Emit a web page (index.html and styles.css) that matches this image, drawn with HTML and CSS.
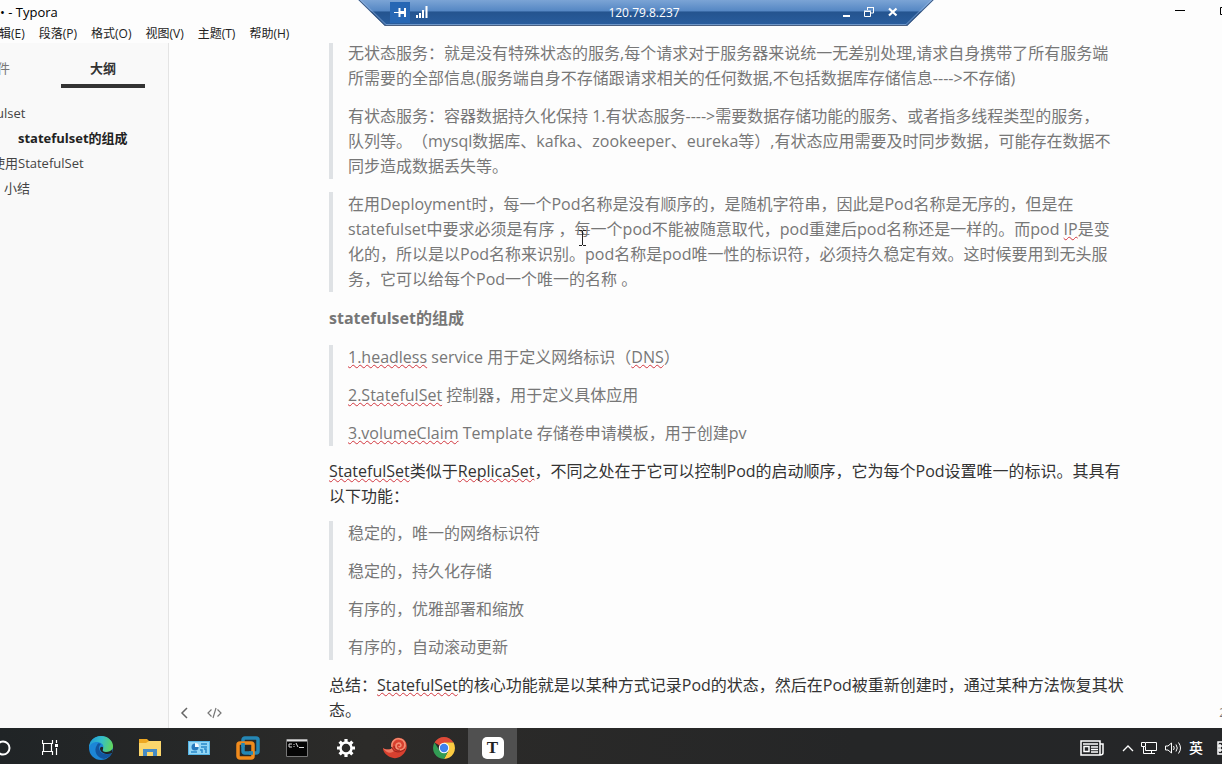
FILE: index.html
```html
<!DOCTYPE html>
<html lang="zh-CN">
<head>
<meta charset="utf-8">
<title>Typora</title>
<link rel="stylesheet" href="styles.css">
</head>
<body>
<header class="titlebar">
  <div class="title-row">
    <span class="title">• - Typora</span>
    <div class="window-controls">
      <button class="plain" aria-label="最小化"><svg width="10" height="10"><path d="M0 4.500H10" stroke="#000"/></svg></button>
      <button class="plain" aria-label="最大化"><svg width="10" height="10"><path d="M.5 1.500H9.500V8.500H.5Z" fill="none" stroke="#000"/></svg></button>
    </div>
  </div>
  <nav class="menu">
    <button class="plain">编辑(E)</button><button class="plain">段落(P)</button><button class="plain">格式(O)</button><button class="plain">视图(V)</button><button class="plain">主题(T)</button><button class="plain">帮助(H)</button>
  </nav>
</header>

<div class="remote-bar">
  <svg class="remote-shape" viewBox="0 0 576 27" preserveAspectRatio="none">
    <defs><linearGradient id="rb" x1="0" y1="0" x2="0" y2="1"><stop offset="0" stop-color="#7ba4d5"/><stop offset=".42" stop-color="#5587c4"/><stop offset=".46" stop-color="#24548f"/><stop offset="1" stop-color="#2a5e9f"/></linearGradient></defs>
    <path d="M0 0H576L549 26H27Z" fill="url(#rb)"/>
    <path d="M1 0L27 25.500H549L575 0" fill="none" stroke="#4a5f80"/>
    <path d="M3 0L28 24.500H548L573 0" fill="none" stroke="#8fb2dc" stroke-width=".7"/>
  </svg>
  <div class="remote-content">
    <div class="remote-left">
      <button class="plain pin" aria-label="固定"><svg width="13" height="11" fill="none" stroke="#fff"><path d="M0 5.500H5" stroke-width="1"/><path d="M5.500 1V10M11 1V10" stroke-width="2"/><path d="M5 5.500H11" stroke-width="3"/></svg></button>
      <svg width="12" height="12" fill="#fff"><path d="M0 9h2v3H0zM3 7h2v5H3zM6 4h2v8H6zM9.500 0H11.500V12H9.500z"/></svg>
    </div>
    <span class="remote-ip">120.79.8.237</span>
    <div class="remote-right">
      <button class="plain" aria-label="最小化"><svg width="10" height="12"><path d="M3 10H10" stroke="#fff" stroke-width="2"/></svg></button>
      <button class="plain" aria-label="还原"><svg width="10" height="12" fill="none" stroke="#fff"><path d="M3.500 4V1.500H9.500V7H7M3 1.500H10" /><path d="M.5 5.500H6.500V10.500H.5ZM0 5H7"/></svg></button>
      <button class="plain" aria-label="关闭"><svg width="10" height="12"><path d="M1 2.500L8.500 9.500M8.500 2.500L1 9.500" stroke="#fff" stroke-width="2.200"/></svg></button>
    </div>
  </div>
</div>

<div class="workspace">
  <aside class="sidebar">
    <div class="tabs">
      <button class="plain tab">文件</button>
      <button class="plain tab tab-active">大纲</button>
    </div>
    <nav class="outline">
      <a class="cut-word" href="#top">ulset</a>
      <a class="current" href="#parts">statefulset的组成</a>
      <a class="cut" href="#use">使用StatefulSet</a>
      <a class="last" href="#end">小结</a>
    </nav>
  </aside>
  <main class="editor">
    <article class="doc">
      <blockquote>
        <p>无状态服务：就是没有特殊状态的服务,每个请求对于服务器来说统一无差别处理,请求自身携带了所有服务端<br>所需要的全部信息(服务端自身不存储跟请求相关的任何数据,不包括数据库存储信息----&gt;不存储)</p>
        <p>有状态服务：容器数据持久化保持 1.有状态服务----&gt;需要数据存储功能的服务、或者指多线程类型的服务，<br>队列等。（mysql数据库、kafka、zookeeper、eureka等）,有状态应用需要及时同步数据，可能存在数据不<br>同步造成数据丢失等。</p>
      </blockquote>
      <blockquote>
        <p>在用Deployment时，每一个Pod名称是没有顺序的，是随机字符串，因此是Pod名称是无序的，但是在<br>statefulset中要求必须是有序 ，每一个pod不能被随意取代，pod重建后pod名称还是一样的。而pod <u>IP</u>是变<br>化的，所以是以Pod名称来识别。pod名称是pod唯一性的标识符，必须持久稳定有效。这时候要用到无头服<br>务，它可以给每个Pod一个唯一的名称 。</p>
      </blockquote>
      <h6 id="parts">statefulset的组成</h6>
      <blockquote>
        <p><u>1.headless</u> service 用于定义网络标识（<u>DNS</u>）</p>
        <p><u>2.StatefulSet</u> 控制器，用于定义具体应用</p>
        <p><u>3.volumeClaim</u> Template 存储卷申请模板，用于创建pv</p>
      </blockquote>
      <p><u>StatefulSet</u>类似于<u>ReplicaSet</u>，不同之处在于它可以控制Pod的启动顺序，它为每个Pod设置唯一的标识。其具有<br>以下功能：</p>
      <blockquote>
        <p>稳定的，唯一的网络标识符</p>
        <p>稳定的，持久化存储</p>
        <p>有序的，优雅部署和缩放</p>
        <p>有序的，自动滚动更新</p>
      </blockquote>
      <p>总结：<u>StatefulSet</u>的核心功能就是以某种方式记录Pod的状态，然后在Pod被重新创建时，通过某种方法恢复其状<br>态。</p>
    </article>
    <div class="status">
      <button class="plain" aria-label="隐藏侧边栏"><svg width="8" height="12" fill="none" stroke="#666" stroke-width="1.500"><path d="M7 1L2 6L7 11"/></svg></button>
      <button class="plain" aria-label="源代码模式"><svg width="15" height="12" fill="none" stroke="#777" stroke-width="1.200"><path d="M4.500 2.500L1 6L4.500 9.500M10.500 2.500L14 6L10.500 9.500M9 1L6 11"/></svg></button>
    </div>
    <span class="words">2</span>
    <svg class="caret" width="9" height="17" fill="none" stroke="#222"><path d="M1 .5H4M5 .5H8M4.500 1V15M1 15.500H4M5 15.500H8"/></svg>
  </main>
</div>

<footer class="taskbar">
  <div class="apps">
    <button class="plain app" aria-label="Cortana"><svg width="18" height="18"><circle cx="9" cy="9" r="6.500" fill="none" stroke="#fff" stroke-width="2"/></svg></button>
    <button class="plain app" aria-label="任务视图"><svg width="20" height="18" fill="none" stroke="#fff" stroke-width="1.200"><path d="M.5 1V4.500H10.500V1M1.500 4.500V12.500M9.500 4.500V12.500M.5 16V12.500H10.500V16M14.500 1V4M14.500 9V16"/><path d="M13 5h3v3h-3z" fill="#fff" stroke="none"/></svg></button>
    <button class="plain app" aria-label="Edge"><svg width="24" height="24" viewBox="0 0 24 24"><defs><linearGradient id="eg" x1="0" y1=".3" x2="1" y2=".5"><stop offset="0" stop-color="#219bd8"/><stop offset=".5" stop-color="#35bfc8"/><stop offset="1" stop-color="#62d65b"/></linearGradient></defs><circle cx="12" cy="12" r="12" fill="#1c86d6"/><path d="M0 12C0 5 5 0 12 0S24 5 24 10C24 14 21 16 17 16C14 16 13 15 14 13C16 8 11 6 8 6C4 6 1 8 0 12Z" fill="url(#eg)"/><path d="M8 9C4 15 8 22 15 23C19 22 22 19 23 17C19 19 11 19 10 12C10 10 11 9 12 8C10 7 9 7 8 9Z" fill="#12559f"/><path d="M14 13C13 15 14 16 17 16C20 16 22 15 23.500 13L23 17C19 19 12 18 11 13C11 10 15 10 14 13Z" fill="#212325"/></svg></button>
    <button class="plain app" aria-label="文件资源管理器"><svg width="22" height="20" viewBox="0 0 22 20"><path d="M0 1H8L10 3H22V18H0Z" fill="#eda722"/><path d="M0 5H7L10 3H22V18H0Z" fill="#fbd66c"/><path d="M4 18V11H18V18H14V14H8V18Z" fill="#468bc5"/></svg></button>
    <button class="plain app" aria-label="控制面板"><svg width="22" height="16" viewBox="0 0 22 16"><path d="M0 1H22V15H0Z" fill="#55b5e6"/><path d="M1 2H21V14H1Z" fill="#93d6f5"/><circle cx="7" cy="7" r="3.500" fill="#2679bd"/><path d="M7 7V3A4 4 0 0 1 11 7Z" fill="#f4faff"/><path d="M13 4H19M13 7H19M3 12H9M12 10H14V13M16 9H18V13" stroke="#2a89c9" stroke-width="1.500" fill="none"/></svg></button>
    <button class="plain app" aria-label="VMware"><svg width="24" height="24" fill="none" stroke-width="3.500"><rect x="7" y="2" width="15" height="15" rx="2" stroke="#2587b5"/><rect x="2" y="7" width="15" height="15" rx="2" stroke="#f18b1c"/><path d="M7 11V7M13 17H17" stroke="#2587b5"/></svg></button>
    <button class="plain app" aria-label="命令提示符"><svg width="22" height="18"><path d="M.5 .5H21.500V17.500H.5Z" fill="#050505" stroke="#777"/><path d="M1 1.500H21" stroke="#ddd" stroke-width="2"/><path d="M6 5H3V8H6M8 5V6M8 7V8M10 4L12 8M13 8.500H18" stroke="#ddd" fill="none"/></svg></button>
    <button class="plain app" aria-label="设置"><svg width="20" height="20" viewBox="0 0 20 20"><circle cx="10" cy="10" r="5.500" fill="none" stroke="#fff" stroke-width="2.500"/><path d="M10 1V4M10 16V19M1 10H4M16 10H19M3.600 3.600L6 6M14 14L16.400 16.400M16.400 3.600L14 6M6 14L3.600 16.400" stroke="#fff" stroke-width="3.200"/></svg></button>
    <button class="plain app" aria-label="Shell"><svg width="24" height="22" viewBox="0 0 24 22"><path d="M0 11C3 13 7 13 9 11C7 4 12 0 17 1C23 2 25 8 23 13C20 20 13 23 7 20C3 18 0 15 0 11Z" fill="#d8402f"/><path d="M0 11C3 13 7 13 9 11L11 14C8 17 3 16 0 11Z" fill="#ef7a63"/><path d="M9 10C8 4 13 1 17 2C22 3 23 8 21 11C18 14 13 13 13 9C13 6 17 5 18 8C18 10 16 10 16 9" fill="none" stroke="#f28e73" stroke-width="1.600"/><path d="M9 11C11 16 18 16 22 12M11 9C11 12 14 14 17 13" fill="none" stroke="#96201a"/></svg></button>
    <button class="plain app" aria-label="Chrome"><svg width="22" height="22" viewBox="0 0 22 22"><path d="M11 11L1.500 5.500A11 11 0 0 1 20.500 5.500L11 6Z" fill="#df4a38"/><path d="M11 11L20.500 5.500A11 11 0 0 1 11 22L15.500 13.500Z" fill="#fccb42"/><path d="M11 11L15.500 13.500L11 22A11 11 0 0 1 1.500 5.500L6.500 13.500Z" fill="#329c54"/><path d="M11 5.500H20.500L15 14Z" fill="#fccb42"/><circle cx="11" cy="11" r="5.200" fill="#fff"/><circle cx="11" cy="11" r="4.200" fill="#3f82ed"/></svg></button>
    <button class="plain app app-active" aria-label="Typora"><span class="typora">T</span></button>
  </div>
  <div class="tray">
    <svg width="24" height="16" fill="none" stroke="#fff" stroke-width="1.500"><path d="M1 1H20V15H1ZM20 4H23V13Q23 15 20 15"/><path d="M4 6.500H9V11.500H4ZM3 4H18M11 7H18M11 9.500H18M11 12H18"/></svg>
    <svg width="12" height="8" fill="none" stroke="#fff" stroke-width="1.300"><path d="M1 7L6 2L11 7"/></svg>
    <svg width="17" height="14" fill="none" stroke="#fff"><path d="M5 1.500H15.500V9.500H4.500V6M10.500 9.500V12.500M5 12.500H14M.5 1.500H4.500V5.500H.5ZM2.500 6V12.500H5"/></svg>
    <svg width="17" height="14" fill="none" stroke="#fff"><path d="M.5 5V9H3L6.500 12V2L3 5ZM8.500 5Q10 7 8.500 9M11 3.500Q13.500 7 11 10.500M13.500 1.500Q17.500 7 13.500 12.500"/></svg>
    <span class="ime">英</span>
    <svg width="14" height="14" fill="none" stroke="#fff"><path d="M1 1H13V13H1ZM3 3V11M1 5H5M1 9H5" stroke-width="1.500"/></svg>
  </div>
</footer>
</body>
</html>
```
FILE: styles.css
```css
* { box-sizing: border-box; }
body {
  margin: 0;
  height: 100vh;
  display: flex;
  flex-direction: column;
  overflow: hidden;
  background: #fdfdfd;
  color: #333;
  font-family: "Open Sans", "Noto Sans CJK SC", sans-serif;
  white-space: nowrap;
  text-spacing-trim: space-all;
}
svg { display: block; flex: none; }
.plain { border: 0; padding: 0; margin: 0; background: none; color: inherit; font: inherit; }

.titlebar { flex: none; height: 43px; font-size: 12px; color: #222; }
.title-row { height: 24px; display: flex; align-items: center; justify-content: space-between; color: #000; }
.title { font-size: 13px; }
.window-controls { display: flex; gap: 35px; margin-right: -8px; padding-bottom: 2px; }
.menu { display: flex; gap: 14px; margin-left: -13px; line-height: 19px; }

.remote-bar { position: absolute; top: 0; left: 358px; width: 576px; height: 27px; color: #fff; }
.remote-shape { position: absolute; width: 100%; height: 100%; }
.remote-content {
  position: relative;
  display: grid;
  grid-template-columns: 1fr auto 1fr;
  align-items: center;
  height: 24px;
  padding: 0 36px 0 32px;
  font-size: 12px;
}
.remote-left { display: flex; align-items: center; gap: 6px; }
.pin { background: #2767b4; padding: 5px 3px 5px 4px; }
.remote-right { display: flex; justify-content: flex-end; gap: 14px; }

.workspace { flex: 1; min-height: 0; display: flex; }
.sidebar { flex: none; width: 169px; overflow: hidden; background: #f9f9f9; border-right: 1px solid #e4e4e4; font-size: 13px; }
.tabs { display: flex; gap: 22px; margin-left: -45px; padding-top: 8px; }
.tab { width: 84px; height: 37px; color: #777; border-bottom: 4px solid transparent; }
.tab-active { color: #333; font-weight: 700; border-color: #333; }
.outline { display: flex; flex-direction: column; padding-top: 13px; line-height: 25px; }
.outline a { color: #444; text-decoration: none; }
.outline .cut { margin-left: -8px; }
.outline .cut-word { margin-left: -4px; }
.outline .current { color: #222; font-weight: 700; padding-left: 18px; }
.outline .last { padding-left: 4px; }

.editor { flex: 1; min-width: 0; position: relative; overflow: hidden; padding-left: 160px; }
.doc { margin-top: -2px; font-size: 16px; line-height: 25px; }
.doc p { margin: 0 0 12px; }
.doc blockquote { margin: 0 0 13px; padding-left: 15px; border-left: 4px solid #dfe2e5; color: #777; }
.doc blockquote p { margin: 0 0 13px; }
.doc blockquote p:last-child { margin-bottom: 0; }
.doc h6 { margin: 0 0 14px; font-size: 16px; line-height: 26px; color: #777; }
.doc u { text-decoration: underline wavy #d2373f 1px; text-underline-offset: 1px; text-decoration-skip-ink: none; }
.status { position: absolute; left: 11px; bottom: 9px; display: flex; gap: 19px; }
.words { position: absolute; right: -4px; bottom: 5px; font-size: 12px; line-height: 20px; color: #777; }
.caret { position: absolute; left: 409px; top: 187px; }

.taskbar { flex: none; height: 36px; display: flex; justify-content: space-between; background: linear-gradient(90deg, #202426, #2c2b29 30%, #252627 70%, #252628); overflow: hidden; }
.apps { display: flex; margin-left: -22px; }
.app { width: 49px; height: 40px; display: flex; align-items: center; justify-content: center; }
.app-active { background: #505050; }
.typora { width: 22px; height: 22px; border-radius: 5px; background: #fff; color: #222; font: 700 17px/22px "Liberation Serif", serif; }
.tray { display: flex; align-items: center; gap: 7px; height: 40px; margin-right: -9px; color: #fff; }
.tray svg:first-child { margin-right: 11px; }
.ime { font-size: 14px; font-weight: 500; line-height: 20px; margin-right: 7px; }
```
